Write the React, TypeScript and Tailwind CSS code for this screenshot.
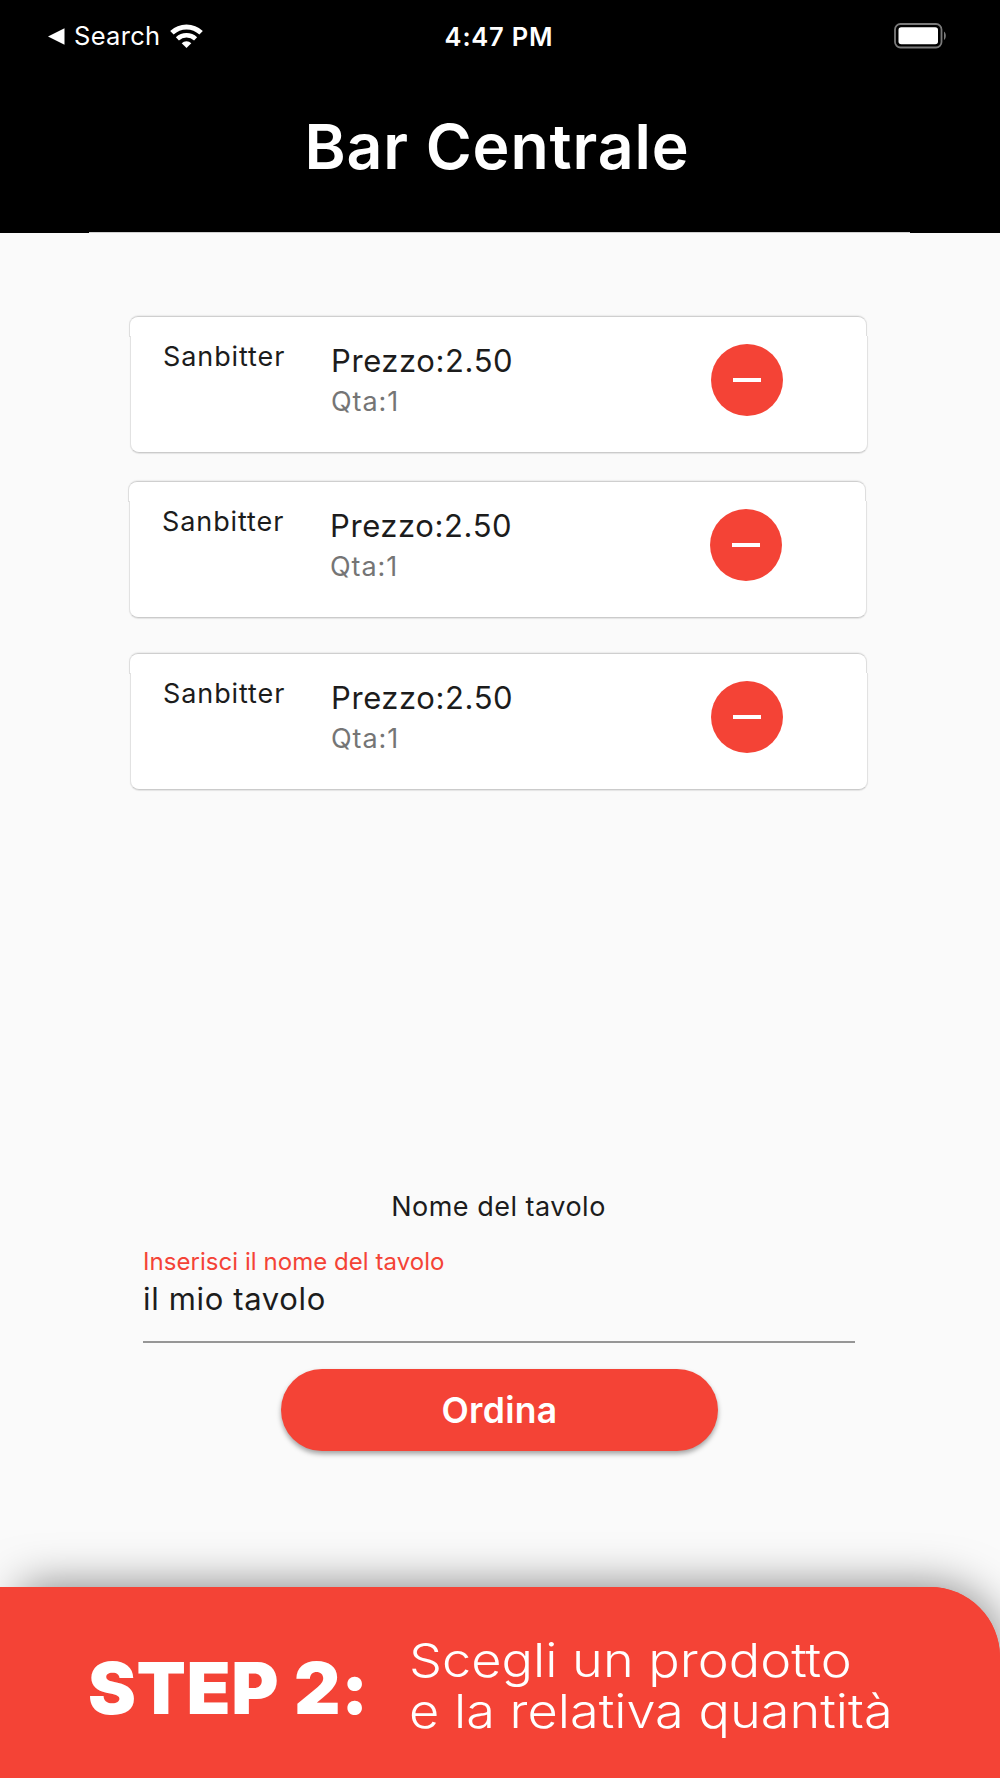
import clsx from "clsx"

type OrderItem = {
    name:string
    price:string
    quantity:number
    className:string
}

const items:OrderItem[] = [
    {name:"Sanbitter",price:"2.50",quantity:1,className:"ml-[129px]"},
    {name:"Sanbitter",price:"2.50",quantity:1,className:"ml-[128px] mt-[27.500px]"},
    {name:"Sanbitter",price:"2.50",quantity:1,className:"ml-[129px] mt-[35.500px]"},
]

const WifiIcon = () => {
    return(
        <svg width="33" height="24" viewBox="0 0 33 24" fill="none" stroke="#fff" aria-label="Wi-Fi">
            <path d="M1.900 8.800a21.200 21.200 0 0 1 29.200 0" strokeWidth="5"/>
            <path d="M7.400 14.900a13.400 13.400 0 0 1 18.200 0" strokeWidth="4.500"/>
            <path d="M16.500 24l-4.800-4.800a6.800 6.800 0 0 1 9.600 0z" fill="#fff" stroke="none"/>
        </svg>
    )
}

const BatteryIcon = () => {
    return(
        <svg width="53" height="26" viewBox="0 0 53 26" fill="none" aria-label="Battery">
            <rect x="1" y="1" width="46.5" height="23.5" rx="5.5" stroke="#7a7a7a" strokeWidth="1.8"/>
            <rect x="4.500" y="4.300" width="39.500" height="17" rx="2.800" fill="#fff"/>
            <path d="M50 8.600c2.400 1.400 2.400 7 0 8.400z" fill="#7a7a7a"/>
        </svg>
    )
}

const StatusBar = () => {
    return(
        <div className="flex h-[72px] items-center justify-between pl-[48px] pr-[53px] text-white">
            <div className="flex w-[300px] items-center">
                <svg width="17" height="17" viewBox="0 0 17 17" fill="#fff"><path d="M0 8.500L16.500 0.300V16.700z"/></svg>
                <span className="ml-[9px] text-[25.500px] leading-8 tracking-[0.3px]">Search</span>
                <span className="-mt-[1px] ml-[10px]"><WifiIcon/></span>
            </div>
            <span className="mt-px ml-[3px] text-[25.500px] leading-8 font-[560] tracking-[0.8px] whitespace-nowrap">4:47 PM</span>
            <div className="-mt-[1px] flex w-[300px] justify-end"><BatteryIcon/></div>
        </div>
    )
}

const ItemCard = ({name,price,quantity,className}:OrderItem) => {
    return(
        <div className={clsx("relative flex h-[137px] w-[739px]",className)}>
            {/* card surface, the cap sits one pixel further left than the body */}
            <div className="absolute inset-0 flex flex-col">
                <div className="h-[21px] w-[738px] rounded-t-[9px] border-x border-t border-x-[#dedede] border-t-[#cfcfcf] bg-white shadow-[0_-1px_1px_#ececec]"/>
                <div className="-mt-[1px] ml-[1px] h-[117px] rounded-b-[9px] border-x border-b border-x-[#e2e2e2] border-b-[#cbcbcb] bg-white shadow-[0_1px_1px_#e4e4e4]"/>
            </div>
            <div className="relative flex w-full">
                <span className="mt-[25px] ml-[34px] w-[168px] text-[27px] leading-8 font-[380] tracking-[0.9px] text-[#1c1c1c]">{name}</span>
                <div className="mt-[26px] w-[380px]">
                    <p className="text-[31px] leading-[38px] font-[380] tracking-[0.6px] text-[#1c1c1c]">Prezzo:{price}</p>
                    <p className="mt-[6px] text-[27px] leading-8 font-[380] tracking-[0.9px] text-[#757575]">Qta:{quantity}</p>
                </div>
                <button aria-label="Rimuovi" className="mt-[28px] flex size-[72px] items-center justify-center rounded-full bg-[#f44336]">
                    <span className="h-[4px] w-[28px] bg-white"/>
                </button>
            </div>
        </div>
    )
}

export default function App() {
    return(
        <div className="flex h-[1778px] w-[1000px] flex-col overflow-hidden bg-[#fafafa] font-['Inter',sans-serif]">
            <header className="h-[233px] bg-black">
                <StatusBar/>
                <h1 className="mt-[36px] h-[124px] pr-[6px] text-center text-[62.500px] leading-[76px] font-[560] tracking-[0.900px] text-white">Bar Centrale</h1>
                <div className="mr-[90px] ml-[89px] h-px bg-[#cfcfcf]"/>
            </header>

            <main className="flex-1 pt-[83px]">
                {items.map((item,index) => <ItemCard key={index} {...item}/>)}

                <p className="mt-[401px] pr-[3px] text-center text-[27px] leading-8 font-[380] tracking-[0.5px] text-[#1c1c1c]">Nome del tavolo</p>
                <div className="mr-[145px] ml-[143px] border-b-2 border-[#969696] pt-6 pb-[23px]">
                    <p className="text-[24px] leading-[30px] font-[380] tracking-[0.05px] text-[#f44336]">Inserisci il nome del tavolo</p>
                    <p className="mt-[3px] text-[31px] leading-[38px] font-[380] tracking-[0.65px] text-[#1c1c1c]">il mio tavolo</p>
                </div>
                <button className="mt-[26px] ml-[281px] flex h-[82px] w-[437px] items-center justify-center rounded-full bg-[#f44336] pt-[2px] text-[35.500px] font-semibold tracking-[0.3px] text-white shadow-[0_3px_5px_rgba(0,0,0,0.35)]">Ordina</button>
            </main>

            <footer className="relative flex h-[191px] w-[1000px] rounded-tr-[70px] bg-[#f44336] text-white">
                <div className="absolute inset-0 left-[22px] rounded-tr-[70px] shadow-[0_0_46px_rgba(0,0,0,0.5)]"/>
                <div className="relative flex w-full rounded-tr-[70px] bg-[#f44336]">
                    <strong className="mt-[57px] ml-[88px] w-[321px] text-[72px] leading-[88px] font-black tracking-[0.600px] whitespace-nowrap">STEP 2:</strong>
                    <div className="mt-[47px] w-[430px] origin-left scale-x-[1.112] text-[47px] leading-[51px] font-light whitespace-nowrap">
                        <p>Scegli un prodotto</p>
                        <p>e la relativa quantità</p>
                    </div>
                </div>
            </footer>
        </div>
    )
}
